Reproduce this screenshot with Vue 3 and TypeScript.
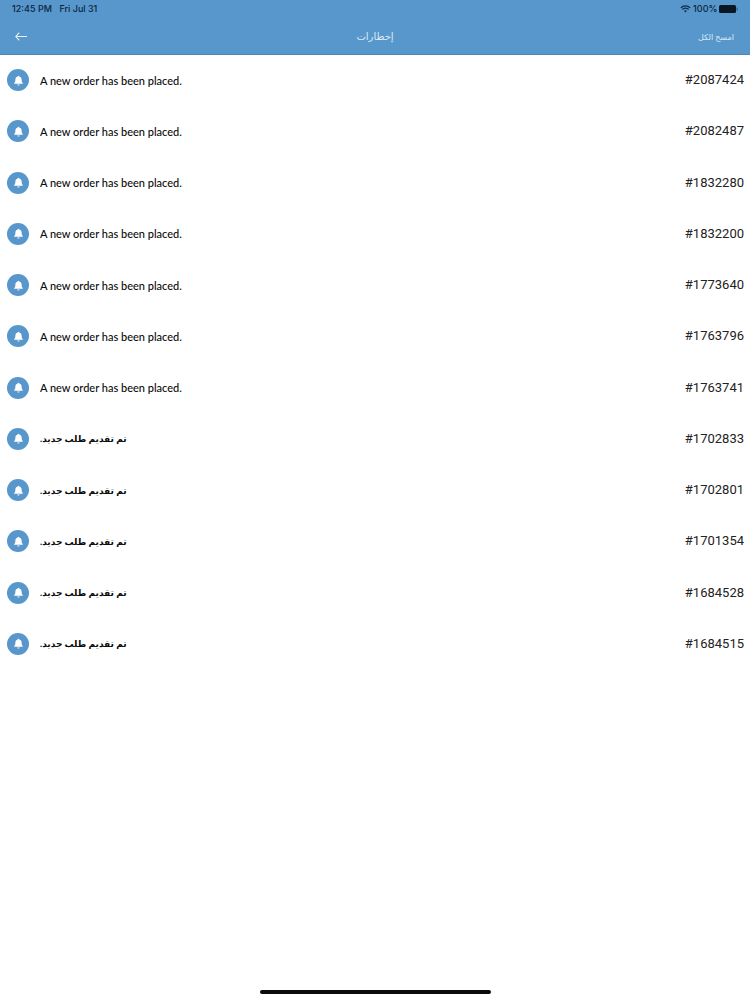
<script setup lang="ts">
interface Row { text: string; id: string; ar: boolean }
const en = 'A new order has been placed.'
const ar = 'تم تقديم طلب جديد.'
const rows: Row[] = [
  { text: en, id: '#2087424', ar: false },
  { text: en, id: '#2082487', ar: false },
  { text: en, id: '#1832280', ar: false },
  { text: en, id: '#1832200', ar: false },
  { text: en, id: '#1773640', ar: false },
  { text: en, id: '#1763796', ar: false },
  { text: en, id: '#1763741', ar: false },
  { text: ar, id: '#1702833', ar: true },
  { text: ar, id: '#1702801', ar: true },
  { text: ar, id: '#1701354', ar: true },
  { text: ar, id: '#1684528', ar: true },
  { text: ar, id: '#1684515', ar: true },
]
</script>

<template>
  <div class="page">
    <header class="header">
      <div class="status">
        <div class="status-left"><span>12:45 PM</span><span>Fri Jul 31</span></div>
        <div class="status-right">
          <svg class="wifi" viewBox="0 0 14 10" width="11" height="8">
            <path d="M1 3.600a8.500 8.500 0 0 1 12 0M3 5.600a5.600 5.600 0 0 1 8 0" fill="none" stroke="#0e2a47" stroke-width="1.500" />
            <path d="M5.100 7.300a2.900 2.900 0 0 1 3.800 0L7 9.600z" fill="#0e2a47" />
          </svg>
          <span class="pct">100%</span>
          <svg class="battery" viewBox="0 0 18.600 8" width="18.600" height="8">
            <rect x="0" y="0" width="17" height="8" rx="1.500" fill="#0a1624" />
            <rect x="17.600" y="2.500" width="1" height="3" rx="0.500" fill="#2b4f73" />
          </svg>
        </div>
      </div>
      <div class="nav">
        <svg class="back" viewBox="0 0 12 9" width="12" height="9">
          <path d="M12 4.500H.8M4.300 .7.800 4.500l3.500 3.800" fill="none" stroke="#e8f2fa" stroke-width="1.100" />
        </svg>
        <div class="title" dir="rtl">إخطارات</div>
        <div class="clear" dir="rtl">امسح الكل</div>
      </div>
    </header>

    <main class="list">
      <div v-for="row in rows" :key="row.id" class="row">
        <span class="badge">
          <svg viewBox="0 0 12 12" width="11" height="11">
            <path d="M6 .8c.5 0 .8.300.8.800 1.700.400 2.600 1.700 2.600 3.400 0 2 .5 3 1.300 3.900.2.300 0 .7-.4.700H1.700c-.4 0-.6-.4-.4-.7.8-.9 1.300-1.900 1.300-3.900 0-1.700.9-3 2.600-3.400 0-.5.3-.8.8-.8zM4.700 10.300h2.600c0 .7-.6 1.100-1.300 1.100s-1.300-.4-1.300-1.100z" fill="#fff" />
          </svg>
        </span>
        <span class="text" :class="{ arabic: row.ar }" :dir="row.ar ? 'rtl' : 'ltr'">{{ row.text }}</span>
        <span class="id">{{ row.id }}</span>
      </div>
    </main>

    <div class="home"></div>
  </div>
</template>

<style>
html, body { margin: 0; background: #fff; }
</style>

<style scoped>
.page {
  width: 750px;
  height: 1000px;
  background: #fff;
  display: flex;
  flex-direction: column;
  position: relative;
  overflow: hidden;
  font-family: "Lato", "DejaVu Sans", sans-serif;
}
.header {
  height: 55px;
  background: #5797cb;
  border-bottom: 1px solid #4f86b3;
  box-sizing: border-box;
  flex: none;
}
.status {
  height: 17px;
  display: flex;
  justify-content: space-between;
  align-items: center;
  padding: 0 12px;
  font: 500 9px "Inter", "Roboto", sans-serif;
  color: #0c2640;
}
.status-left { display: flex; gap: 7.500px; }
.status-right { display: flex; align-items: center; gap: 2px; }
.nav {
  height: 37px;
  display: flex;
  align-items: center;
  justify-content: space-between;
  padding: 0 16px 0 15px;
  position: relative;
}
.back { margin-top: 1px; }
.title {
  position: absolute;
  left: 0;
  right: 0;
  top: 13px;
  text-align: center;
  font-size: 10px;
  color: #dbeaf6;
}
.clear {
  font-size: 8px;
  color: #dbeaf6;
  margin-top: 2px;
}
.list {
  margin-top: -0.600px;
  display: flex;
  flex-direction: column;
}
.row {
  height: 51.270px;
  display: flex;
  align-items: center;
  padding: 0 6px 0 7px;
  box-sizing: border-box;
}
.badge {
  width: 22px;
  height: 22px;
  border-radius: 50%;
  background: #5797cb;
  display: flex;
  align-items: center;
  justify-content: center;
  flex: none;
}
.text {
  margin-left: 11px;
  font-size: 11px;
  font-weight: 500;
  color: #0c0c0c;
}
.text.arabic {
  font-size: 9px;
  font-weight: 700;
  color: #0a0a0a;
}
.id {
  margin-left: auto;
  margin-top: -1px;
  font: 400 13px "Roboto", "Inter", sans-serif;
  color: #222;
}
.home {
  position: absolute;
  left: 260px;
  bottom: 6px;
  width: 231px;
  height: 4px;
  border-radius: 2px;
  background: #0a0a0a;
}
</style>
